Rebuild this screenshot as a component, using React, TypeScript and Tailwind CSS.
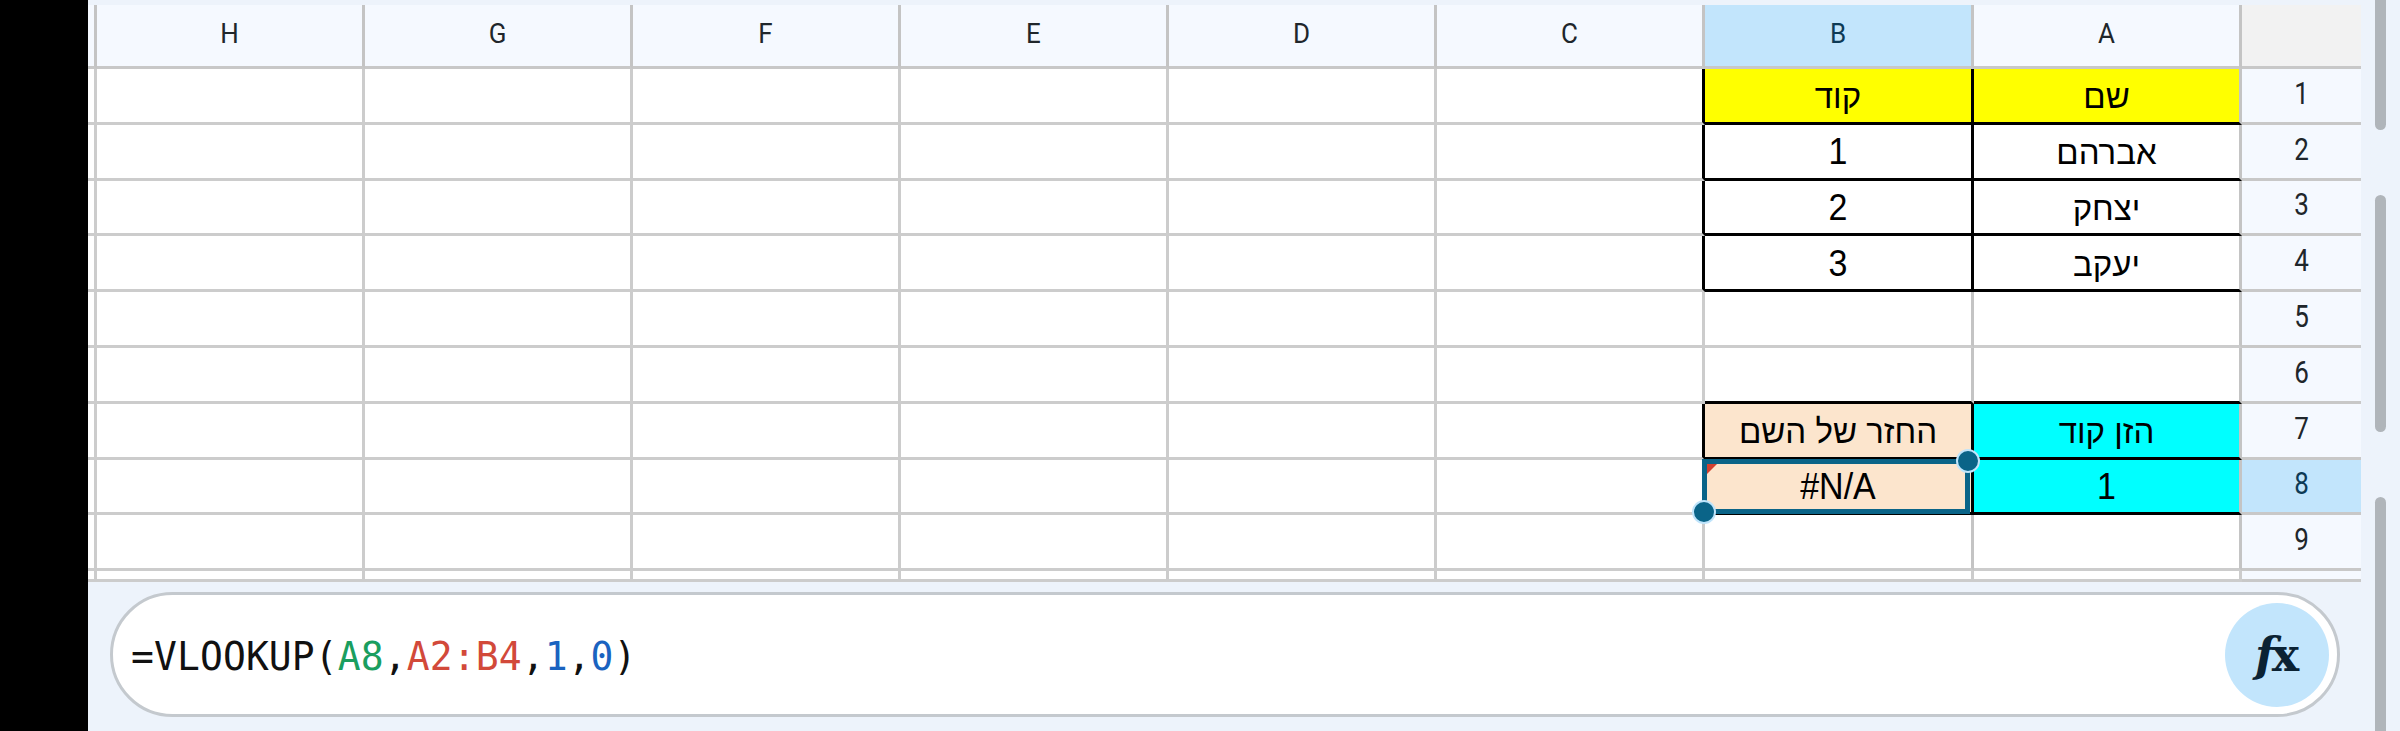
const columns = ['H', 'G', 'F', 'E', 'D', 'C']
const rowNumbers = [1, 2, 3, 4, 5, 6, 7, 8, 9]

interface TableCell {
  text?: string
  bg?: string
  blackBottom?: boolean
  blackRight?: boolean
  digit?: boolean
}

// column B and column A, row by row
const colB: TableCell[] = [
  { text: 'קוד', bg: 'bg-[#ffff00]', blackBottom: true, blackRight: true },
  { text: '1', bg: 'bg-white', blackBottom: true, blackRight: true, digit: true },
  { text: '2', bg: 'bg-white', blackBottom: true, blackRight: true, digit: true },
  { text: '3', bg: 'bg-white', blackBottom: true, blackRight: true, digit: true },
  {},
  { blackBottom: true },
  { text: 'החזר של השם', bg: 'bg-[#fce5cd]', blackBottom: true, blackRight: true },
  { text: '#N/A', bg: 'bg-[#fce5cd]', blackBottom: true, blackRight: true, digit: true },
  {},
]

const colA: TableCell[] = [
  { text: 'שם', bg: 'bg-[#ffff00]', blackBottom: true },
  { text: 'אברהם', bg: 'bg-white', blackBottom: true },
  { text: 'יצחק', bg: 'bg-white', blackBottom: true },
  { text: 'יעקב', bg: 'bg-white', blackBottom: true },
  {},
  { blackBottom: true },
  { text: 'הזן קוד', bg: 'bg-[#00ffff]', blackBottom: true },
  { text: '1', bg: 'bg-[#00ffff]', blackBottom: true, digit: true },
  {},
]

function HeaderCell({ label, selected }: { label: string; selected?: boolean }) {
  return (
    <div
      className={`flex items-center justify-center border-b-[3px] border-r-[3px] border-b-[#c8c8c8] border-r-[#c4c4c4] pb-[2px] text-[26px] font-['Roboto',sans-serif] ${
        selected ? 'bg-[#c2e5fc] text-[#0d3a55]' : 'bg-[#f5f9ff] text-[#20262b]'
      }`}
    >
      <span className="scale-y-[1.05]">{label}</span>
    </div>
  )
}

function EmptyCell({ blackRight }: { blackRight?: boolean }) {
  return (
    <div className={`border-b-[3px] border-r-[3px] border-b-[#cccccc] bg-white ${blackRight ? 'border-r-black' : 'border-r-[#cccccc]'}`} />
  )
}

function DataCell({ cell, children }: { cell: TableCell; children?: React.ReactNode }) {
  return (
    <div
      className={`relative flex items-center justify-center border-b-[3px] border-r-[3px] leading-none text-black font-['Liberation_Sans',sans-serif] ${
        cell.bg ?? 'bg-white'
      } ${cell.blackBottom ? 'border-b-black' : 'border-b-[#cccccc]'} ${cell.blackRight ? 'border-r-black' : 'border-r-[#c4c4c4]'}`}
    >
      <span className={cell.digit ? 'scale-y-[1.1] text-[34px]' : 'pt-[3px] text-[33px]'}>{cell.text}</span>
      {children}
    </div>
  )
}

function Selection() {
  return (
    <div className="absolute -left-[3px] -top-[1px] bottom-[-2px] right-[1px] z-10 border-[5px] border-[#0a6488]">
      <div className="absolute left-0 top-0 h-0 w-0 border-r-[10px] border-t-[10px] border-r-transparent border-t-[#d2402f]" />
      <div className="absolute -right-[15px] -top-[15px] h-[24px] w-[24px] rounded-full border-[2px] border-[#bfe4fb] bg-[#0a6488]" />
      <div className="absolute -bottom-[15px] -left-[15px] h-[24px] w-[24px] rounded-full border-[2px] border-[#bfe4fb] bg-[#0a6488]" />
    </div>
  )
}

export default function App() {
  return (
    <div className="flex h-[731px] w-[2400px] overflow-hidden bg-black">
      <div className="w-[88px] shrink-0 bg-black" />

      <div className="flex w-[2273px] shrink-0 flex-col bg-[#edf3fb]">
        <div className="h-[5px] shrink-0" />

        {/* Sheet */}
        <div className="grid grid-cols-[9px_repeat(6,268px)_269px_268px_119px] grid-rows-[64px_repeat(9,55.8px)_11px]">
          <div className="border-b-[3px] border-r-[3px] border-b-[#c8c8c8] border-r-[#c4c4c4] bg-[#f5f9ff]" />
          {columns.map((c) => (
            <HeaderCell key={c} label={c} />
          ))}
          <HeaderCell label="B" selected />
          <HeaderCell label="A" />
          <div className="border-b-[3px] border-b-[#c8c8c8] bg-[#f2f2f2]" />

          {rowNumbers.map((n, i) => {
            const b = colB[i]
            const a = colA[i]
            const edge = Boolean(b.bg)
            return (
              <div key={n} className="contents">
                <EmptyCell />
                {columns.map((c) => (
                  <EmptyCell key={c} blackRight={c === 'C' && edge} />
                ))}
                <DataCell cell={b}>{n === 8 && <Selection />}</DataCell>
                <DataCell cell={a} />
                <div
                  className={`flex items-center justify-center border-b-[3px] border-b-[#c8c8c8] pb-[4px] text-[26px] font-['Roboto',sans-serif] ${
                    n === 8 ? 'bg-[#c2e5fc] text-[#0d3a55]' : 'bg-[#f5f9ff] text-[#20262b]'
                  }`}
                >
                  <span className="scale-y-[1.18]">{n}</span>
                </div>
              </div>
            )
          })}

          {/* Sliver of row 10 */}
          <EmptyCell />
          {columns.map((c) => (
            <EmptyCell key={c} />
          ))}
          <EmptyCell />
          <EmptyCell />
          <div className="border-b-[3px] border-b-[#c8c8c8] bg-[#f5f9ff]" />
        </div>

        {/* Formula bar */}
        <div className="flex flex-1 pb-[14px] pl-[22px] pr-[21px] pt-[10px]">
          <div className="flex flex-1 items-center justify-between rounded-full border-[3px] border-[#c4c9ce] bg-white pl-[18px] pr-[8px]">
            <div className="scale-y-[1.05] pt-[2px] text-[38px] leading-none tracking-[0.1px] text-[#111111] font-['DejaVu_Sans_Mono',monospace]">
              =VLOOKUP(<span className="text-[#1a9e5f]">A8</span>,<span className="text-[#d2493a]">A2:B4</span>,
              <span className="text-[#1a63c0]">1</span>,<span className="text-[#1a63c0]">0</span>)
            </div>
            <div className="flex h-[104px] w-[104px] items-center justify-center rounded-full bg-[#c2e5fc] text-[46px] font-bold leading-none text-[#0b2233] font-['DejaVu_Serif',serif]">
              <span className="italic">f</span>
              <span className="-ml-[3px]">x</span>
            </div>
          </div>
        </div>
      </div>

      {/* Overlay scrollbars */}
      <div className="flex w-[39px] shrink-0 flex-col gap-[65px] bg-[#edf3fb] pl-[14px]">
        <div className="h-[130px] w-[11px] shrink-0 rounded-b-full bg-[#b0b5ba]" />
        <div className="h-[237px] w-[11px] shrink-0 rounded-full bg-[#b0b5ba]" />
        <div className="h-[234px] w-[11px] shrink-0 rounded-t-full bg-[#b0b5ba]" />
      </div>
    </div>
  )
}
